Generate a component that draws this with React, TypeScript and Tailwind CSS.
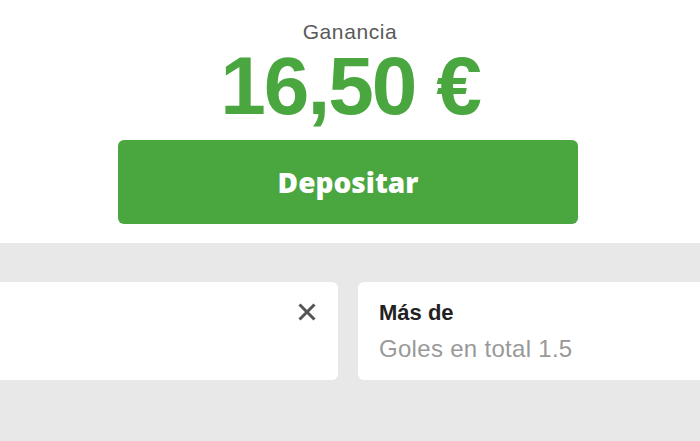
const CloseIcon = () => (
  <svg width="18" height="18" viewBox="0 0 18 18" className="text-[#555]">
    <path d="M1.5 1.5 L16.5 16.5 M16.5 1.5 L1.5 16.5" stroke="currentColor" strokeWidth="3" />
  </svg>
);

const App = () => {
  return (
    <div className="w-[700px] h-[441px] overflow-hidden bg-[#e8e8e8] font-['Liberation_Sans',Arial,sans-serif]">
      <section className="h-[243px] bg-white flex flex-col items-center pt-[20px]">
        <p className="text-[21px] leading-[24px] text-[#5a5a5a] tracking-[0.6px]">Ganancia</p>
        <h1 className="mt-[4px] text-[82px] leading-[76px] font-bold text-[#4aa63f] tracking-[-2px]">
          16,50 €
        </h1>
        <button className="mt-[16px] mr-[4px] w-[460px] h-[84px] rounded-[6px] bg-[#4aa63f] text-white text-[28px] font-extrabold font-['Open_Sans',sans-serif]">
          Depositar
        </button>
      </section>

      <section className="mt-[39px] flex gap-5 -ml-[122px]">
        <div className="w-[460px] h-[98px] shrink-0 rounded-[6px] bg-white flex justify-end items-start pt-[21px] pr-[22px]">
          <CloseIcon />
        </div>
        <div className="w-[460px] h-[98px] shrink-0 rounded-[6px] bg-white pl-[21px] pt-[19px]">
          <p className="text-[22px] leading-[24px] font-bold text-[#222]">Más de</p>
          <p className="mt-[10px] text-[24px] leading-[28px] text-[#999] tracking-[0.3px]">Goles en total 1.5</p>
        </div>
      </section>
    </div>
  );
};

export default App;
